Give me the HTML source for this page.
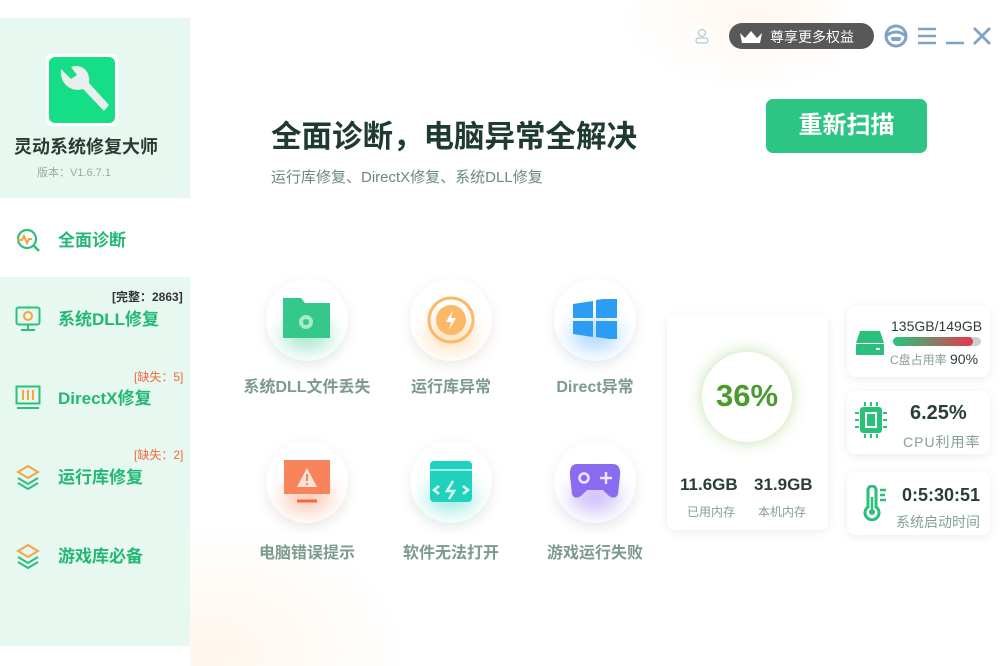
<!DOCTYPE html>
<html><head><meta charset="utf-8"><style>
*{margin:0;padding:0;box-sizing:border-box}
body{width:1000px;height:666px;background:#fff;position:relative;overflow:hidden;font-family:"Liberation Sans","Noto Sans CJK SC",sans-serif}
.a{position:absolute}
.side{background:#e6f8ef}
.nav{position:absolute;left:58px;font-size:17px;font-weight:bold;color:#22b874}
.circ{position:absolute;width:82px;height:82px;border-radius:50%;background:#fff;box-shadow:0 4px 14px rgba(0,0,0,.08)}
.glow{position:absolute;width:50px;height:30px;border-radius:50%;filter:blur(10px);opacity:.45}
.lbl{position:absolute;width:160px;text-align:center;font-size:16px;font-weight:bold;color:#7c9a8e}
.card{position:absolute;background:#fff;border-radius:8px;box-shadow:0 2px 10px rgba(0,0,0,.08)}
</style></head><body>
<div class="a" style="left:620px;top:0;width:220px;height:90px;background:radial-gradient(ellipse at 60% 20%,rgba(255,230,205,.3),rgba(255,255,255,0) 70%)"></div>
<div class="a" style="left:190px;top:520px;width:220px;height:146px;background:radial-gradient(ellipse at 10% 90%,rgba(255,230,205,.35),rgba(255,255,255,0) 70%)"></div>
<!-- sidebar -->
<div class="a side" style="left:0;top:18px;width:190px;height:180px"></div>
<div class="a side" style="left:0;top:277px;width:190px;height:369px"></div>
<div class="a" style="left:46px;top:54px;width:72px;height:72px;border-radius:6px;background:#fff"></div>
<div class="a" style="left:49px;top:57px;width:66px;height:66px;border-radius:6px;background:#16de87"></div>
<svg class="a" style="left:49px;top:57px" width="66" height="66" viewBox="0 0 66 66"><path d="M12 12 L22 22 L28 18 L22 10 C32 6 42 14 40 26 L60 48 L55 54 L34 32 C22 36 10 26 12 12Z" fill="#e8efec"/></svg>
<div class="a" style="left:14px;top:133px;font-size:18px;font-weight:bold;color:#2c3a34">灵动系统修复大师</div>
<div class="a" style="left:37px;top:164px;font-size:11px;color:#9aaba4">版本：V1.6.7.1</div>
<svg class="a" style="left:15px;top:227px" width="26" height="26" viewBox="0 0 26 26"><circle cx="12" cy="12" r="9" fill="none" stroke="#2bbf7c" stroke-width="2.2"/><path d="M18 18 L24 24" stroke="#2bbf7c" stroke-width="2.4"/><path d="M2 13 L7 13 L9 9 L12 16 L14 12 L17 12" fill="none" stroke="#f6a441" stroke-width="2"/></svg>
<div class="nav" style="top:226px">全面诊断</div>
<div class="a" style="left:112px;top:288px;font-size:12px;font-weight:bold;color:#333">[完整：2863]</div>
<svg class="a" style="left:15px;top:306px" width="26" height="26" viewBox="0 0 26 26"><rect x="1.5" y="1.5" width="23" height="17" rx="2" fill="none" stroke="#2bbf7c" stroke-width="2"/><circle cx="13" cy="10" r="4" fill="none" stroke="#f6a441" stroke-width="2"/><path d="M13 19 V23 M6 24 H20" stroke="#2bbf7c" stroke-width="2"/></svg>
<div class="nav" style="top:305px">系统DLL修复</div>
<div class="a" style="left:134px;top:368px;font-size:12px;color:#f4693c">[缺失：5]</div>
<svg class="a" style="left:15px;top:385px" width="26" height="26" viewBox="0 0 26 26"><rect x="1.5" y="1.5" width="23" height="17" fill="none" stroke="#2bbf7c" stroke-width="2"/><path d="M8 5V15 M13 5V15 M18 5V15" stroke="#f6a441" stroke-width="2"/><path d="M2 23 H24" stroke="#2bbf7c" stroke-width="2"/></svg>
<div class="nav" style="top:384px">DirectX修复</div>
<div class="a" style="left:134px;top:446px;font-size:12px;color:#f4693c">[缺失：2]</div>
<svg class="a" style="left:15px;top:464px" width="26" height="26" viewBox="0 0 26 26"><path d="M13 2 L23 8 L13 14 L3 8Z" fill="none" stroke="#f6a441" stroke-width="2"/><path d="M3 14 L13 20 L23 14 M3 19 L13 25 L23 19" fill="none" stroke="#2bbf7c" stroke-width="2"/></svg>
<div class="nav" style="top:463px">运行库修复</div>
<svg class="a" style="left:15px;top:543px" width="26" height="26" viewBox="0 0 26 26"><path d="M13 2 L23 8 L13 14 L3 8Z" fill="none" stroke="#f6a441" stroke-width="2"/><path d="M3 14 L13 20 L23 14 M3 19 L13 25 L23 19" fill="none" stroke="#2bbf7c" stroke-width="2"/></svg>
<div class="nav" style="top:542px">游戏库必备</div>
<!-- top bar -->
<div class="a" style="left:691px;top:25px;width:22px;height:22px;border-radius:50%;background:#fff"></div>
<svg class="a" style="left:694px;top:27px" width="16" height="18" viewBox="0 0 16 18"><circle cx="8" cy="6" r="3.5" fill="none" stroke="#b9cac3" stroke-width="1.3"/><rect x="2" y="11" width="12" height="5" rx="2.5" fill="none" stroke="#b9cac3" stroke-width="1.3"/></svg>
<div class="a" style="left:729px;top:23px;width:145px;height:26px;border-radius:13px;background:#585858"></div>
<svg class="a" style="left:738px;top:29px" width="26" height="16" viewBox="0 0 26 16"><path d="M2 4 L7 9 L13 2 L19 9 L24 4 L22 14 H4Z" fill="#fff"/></svg>
<div class="a" style="left:770px;top:27px;font-size:14px;color:#fff">尊享更多权益</div>
<svg class="a" style="left:882px;top:23px" width="28" height="26" viewBox="0 0 28 26"><circle cx="14" cy="13" r="10" fill="none" stroke="#7fa3c6" stroke-width="3"/><path d="M4 13 Q14 5 24 13" fill="none" stroke="#7fa3c6" stroke-width="3"/><rect x="9" y="14" width="10" height="4" rx="2" fill="#7fa3c6"/></svg>
<svg class="a" style="left:917px;top:26px" width="20" height="20" viewBox="0 0 20 20"><path d="M1 3H19M1 10H19M1 17H19" stroke="#7fa3c6" stroke-width="2.6"/></svg>
<svg class="a" style="left:945px;top:26px" width="20" height="20" viewBox="0 0 20 20"><path d="M1 17H19" stroke="#7fa3c6" stroke-width="2.6"/></svg>
<svg class="a" style="left:972px;top:26px" width="20" height="20" viewBox="0 0 20 20"><path d="M2 2L18 18M18 2L2 18" stroke="#7fa3c6" stroke-width="2.8"/></svg>
<!-- header -->
<div class="a" style="left:271px;top:112px;font-size:30.5px;font-weight:bold;color:#1f3a30">全面诊断，电脑异常全解决</div>
<div class="a" style="left:271px;top:166px;font-size:15px;color:#6a8a7e">运行库修复、DirectX修复、系统DLL修复</div>
<div class="a" style="left:766px;top:99px;width:161px;height:54px;border-radius:7px;background:#2dc583;color:#fff;font-size:24px;font-weight:bold;text-align:center;line-height:54px">重新扫描</div>
<!-- circles -->
<div class="circ" style="left:266px;top:279px"></div>
<div class="circ" style="left:410px;top:279px"></div>
<div class="circ" style="left:554px;top:279px"></div>
<div class="circ" style="left:266px;top:441px"></div>
<div class="circ" style="left:410px;top:441px"></div>
<div class="circ" style="left:554px;top:441px"></div>
<div class="glow" style="left:282px;top:320px;background:#34c98a"></div>
<div class="glow" style="left:426px;top:320px;background:#fbb968"></div>
<div class="glow" style="left:570px;top:320px;background:#4aa8ff"></div>
<div class="glow" style="left:282px;top:482px;background:#f7845a"></div>
<div class="glow" style="left:426px;top:482px;background:#20d1bd"></div>
<div class="glow" style="left:570px;top:482px;background:#8a6cf0"></div>
<svg class="a" style="left:283px;top:298px" width="48" height="44" viewBox="0 0 48 44"><path d="M0 0H18L22 5H47V40H0Z" fill="#34c98a"/><circle cx="23" cy="24" r="7" fill="#a8e8cc"/><circle cx="23" cy="24" r="3" fill="#34c98a"/></svg>
<svg class="a" style="left:426px;top:295px" width="50" height="50" viewBox="0 0 50 50"><circle cx="25" cy="25" r="22" fill="none" stroke="#fbb968" stroke-width="3"/><circle cx="25" cy="25" r="15" fill="#fbb968"/><path d="M27 15 L20 27 H25 L23 35 L30 23 H25Z" fill="#fff"/></svg>
<svg class="a" style="left:573px;top:299px" width="44" height="40" viewBox="0 0 44 40"><path d="M0 5 L20 2 V19 H0Z M23 1 L44 -2 V19 H23Z M0 22 H20 V38 L0 35Z M23 22 H44 V41 L23 38Z" fill="#2c9df5"/></svg>
<svg class="a" style="left:283px;top:459px" width="48" height="46" viewBox="0 0 48 46"><rect x="1" y="1" width="46" height="34" fill="#f7845a"/><path d="M24 9 L34 28 H14Z" fill="#fde2d6"/><path d="M24 15V22M24 24V26" stroke="#f7845a" stroke-width="2"/><path d="M14 42H34" stroke="#f06a40" stroke-width="3"/></svg>
<svg class="a" style="left:429px;top:460px" width="44" height="43" viewBox="0 0 44 43"><rect x="1" y="1" width="42" height="41" rx="4" fill="#20d1bd"/><path d="M1 10H43" stroke="#a6f0e4" stroke-width="2"/><path d="M10 26L5 30 10 34M34 26L39 30 34 34M24 21L18 31H25L20 39" fill="none" stroke="#d8fbf4" stroke-width="2.5"/></svg>
<svg class="a" style="left:569px;top:462px" width="52" height="38" viewBox="0 0 52 38"><path d="M8 2 H44 Q52 2 51 14 L49 32 Q47 38 40 34 L34 28 H18 L12 34 Q5 38 3 32 L1 14 Q0 2 8 2Z" fill="#8a6cf0"/><circle cx="15" cy="16" r="4.5" fill="none" stroke="#ebe5ff" stroke-width="2.5"/><path d="M37 10V22M31 16H43" stroke="#ebe5ff" stroke-width="2.5"/></svg>
<div class="lbl" style="left:227px;top:373px">系统DLL文件丢失</div>
<div class="lbl" style="left:371px;top:373px">运行库异常</div>
<div class="lbl" style="left:515px;top:373px">Direct异常</div>
<div class="lbl" style="left:227px;top:539px">电脑错误提示</div>
<div class="lbl" style="left:371px;top:539px">软件无法打开</div>
<div class="lbl" style="left:515px;top:539px">游戏运行失败</div>
<!-- memory -->
<div class="card" style="left:667px;top:315px;width:161px;height:215px"></div>
<div class="a" style="left:702px;top:352px;width:90px;height:90px;border-radius:50%;background:#fff;box-shadow:0 0 16px rgba(120,190,80,.45)"></div>
<div class="a" style="left:702px;top:378px;width:90px;text-align:center;font-size:31px;font-weight:bold;color:#4a9a2e">36%</div>
<div class="a" style="left:680px;top:475px;font-size:17px;font-weight:bold;color:#2b3e36">11.6GB</div>
<div class="a" style="left:754px;top:475px;font-size:17px;font-weight:bold;color:#2b3e36">31.9GB</div>
<div class="a" style="left:687px;top:503px;font-size:12px;color:#86a096">已用内存</div>
<div class="a" style="left:758px;top:503px;font-size:12px;color:#86a096">本机内存</div>
<!-- right cards -->
<div class="card" style="left:847px;top:306px;width:143px;height:71px"></div>
<svg class="a" style="left:855px;top:331px" width="30" height="25" viewBox="0 0 30 25"><path d="M5 0H25L29 12H1Z" fill="#2bbf7c"/><rect x="1" y="13" width="28" height="11" rx="1" fill="#2bbf7c"/><rect x="21" y="17" width="4" height="2" fill="#fff"/></svg>
<div class="a" style="left:891px;top:318px;font-size:14px;color:#2b3e36">135GB/149GB</div>
<div class="a" style="left:893px;top:337px;width:88px;height:9px;border-radius:5px;background:#c8d2cd"></div>
<div class="a" style="left:893px;top:337px;width:80px;height:9px;border-radius:5px;background:linear-gradient(90deg,#22c77f,#e5384a)"></div>
<div class="a" style="left:890px;top:351px;font-size:12px;color:#86a096">C盘占用率 <span style="font-size:14px;color:#2b3e36">90%</span></div>
<div class="card" style="left:847px;top:391px;width:143px;height:63px"></div>
<svg class="a" style="left:855px;top:401px" width="32" height="40" viewBox="0 0 32 40"><rect x="5" y="6" width="22" height="26" rx="3" fill="#2bbf7c"/><rect x="10" y="11" width="12" height="16" fill="#fff"/><rect x="12" y="13" width="8" height="12" fill="#2bbf7c"/><path d="M10 1V5M16 1V5M22 1V5M10 33V37M16 33V37M22 33V37M0 12H4M0 19H4M0 26H4M28 12H32M28 19H32M28 26H32" stroke="#2bbf7c" stroke-width="2"/></svg>
<div class="a" style="left:910px;top:402px;font-size:20px;font-weight:bold;color:#2b3e36">6.25%</div>
<div class="a" style="left:903px;top:432px;font-size:14px;color:#86a096;letter-spacing:1px">CPU利用率</div>
<div class="card" style="left:847px;top:472px;width:143px;height:63px"></div>
<svg class="a" style="left:862px;top:485px" width="26" height="36" viewBox="0 0 26 36"><path d="M6 22V5a4 4 0 0 1 8 0V22a7 7 0 1 1-8 0Z" fill="none" stroke="#2bbf7c" stroke-width="3"/><circle cx="10" cy="27" r="3" fill="#2bbf7c"/><path d="M10 12V24M18 5H24M18 10H23M18 15H24" stroke="#2bbf7c" stroke-width="2.5"/></svg>
<div class="a" style="left:902px;top:485px;font-size:18px;font-weight:bold;color:#2b3e36">0:5:30:51</div>
<div class="a" style="left:896px;top:512px;font-size:14px;color:#86a096">系统启动时间</div>
</body></html>
